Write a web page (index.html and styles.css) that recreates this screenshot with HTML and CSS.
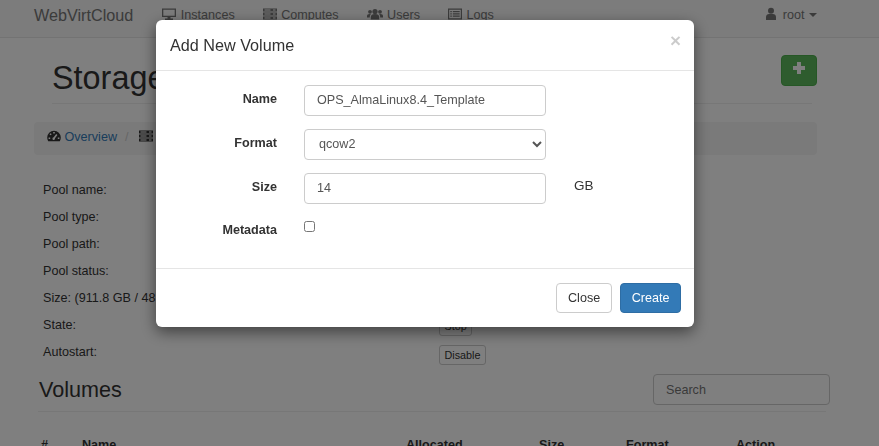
FILE: index.html
```html
<!DOCTYPE html>
<html lang="en">
<head>
  <meta charset="UTF-8">
  <meta name="viewport" content="width=device-width, initial-scale=1.0">
  <title>WebVirtCloud - Storage</title>
  <link rel="stylesheet" href="styles.css">
</head>
<body>

  <nav class="navbar">
    <a class="brand">WebVirtCloud</a>
    <ul class="nav-links">
      <li>
        <svg class="icon" viewBox="0 0 14 14"><path d="M0 1.5h14v8.500H8.500v1.500H11V13H3v-1.500h2.500V10H0zM1.300 2.800v5.900h11.400V2.800z" fill-rule="evenodd"/></svg>
        Instances
      </li>
      <li>
        <svg class="icon" viewBox="0 0 14 14"><path d="M0 1.500h14v3H0zM0 5.500h14v3H0zM0 9.500h14v3H0z"/><path class="cut" d="M1.500 2.600h6v.8h-6zM10 2.600h2.500v.8H10zM1.500 6.600h6v.8h-6zM10 6.600h2.500v.8H10zM1.500 10.600h6v.8h-6zM10 10.600h2.500v.8H10z"/></svg>
        Computes
      </li>
      <li>
        <svg class="icon icon-wide" viewBox="0 0 16 14"><circle cx="8" cy="4.500" r="2.600"/><path d="M3.800 12.500V10c0-2 1.500-3 4.200-3s4.200 1 4.200 3v2.500z"/><circle cx="3" cy="4.800" r="1.900"/><circle cx="13" cy="4.800" r="1.900"/><path d="M0 10.500V9c0-1.300.8-2 2.800-2 .5 0 .8 0 1 .2C3 8 2.800 9 2.800 10.500zM16 10.500V9c0-1.300-.8-2-2.800-2-.5 0-.8 0-1 .2.800.8 1 1.800 1 3.300z"/></svg>
        Users
      </li>
      <li>
        <svg class="icon" viewBox="0 0 14 14"><path d="M0 1.500h14v11H0zM1.200 2.700v8.600h11.600V2.700z" fill-rule="evenodd"/><path d="M2.300 4h1.500v1.200H2.300zM4.800 4h6.900v1.200H4.800zM2.300 6.300h1.500v1.200H2.300zM4.800 6.300h6.900v1.200H4.800zM2.300 8.600h1.500v1.200H2.300zM4.800 8.600h6.900v1.200H4.800z"/></svg>
        Logs
      </li>
    </ul>
    <div class="nav-user">
      <svg class="icon icon-user" viewBox="0 0 12 14"><circle cx="6" cy="3.800" r="3"/><path d="M1 13v-3c0-2 1.500-3 3-3h4c1.500 0 3 1 3 3v3z"/></svg>
      root <span class="caret"></span>
    </div>
  </nav>

  <div class="page">
    <div class="page-header">
      <h1>Storage</h1>
      <button class="btn-add">
        <svg viewBox="0 0 14 14"><path d="M5 1h4v4h4v4H9v4H5V9H1V5h4z"/></svg>
      </button>
    </div>

    <ol class="breadcrumb">
      <li>
        <svg class="icon" viewBox="0 0 14 14"><path d="M7 1.800A6.800 6.800 0 0 0 .2 8.600c0 1.400.4 2.600 1 3.600h11.600c.6-1 1-2.200 1-3.600A6.800 6.800 0 0 0 7 1.800z"/><path class="cut" d="M6.200 3h1.600v1.600H6.200zM2.500 5.200l1.200-1 1 1.100-1.200 1zM1.600 8.400h1.600V10H1.600zM10.800 8.400h1.600V10h-1.600zM9.200 5l1.200 1-2.400 3.300a1.300 1.300 0 1 1-1.300-1z"/></svg>
        Overview
      </li>
      <li class="sep">/</li>
      <li>
        <svg class="icon" viewBox="0 0 14 14"><path d="M0 1.500h14v3H0zM0 5.500h14v3H0zM0 9.500h14v3H0z"/><path class="cut" d="M1.500 2.600h6v.8h-6zM10 2.600h2.500v.8H10zM1.500 6.600h6v.8h-6zM10 6.600h2.500v.8H10zM1.500 10.600h6v.8h-6zM10 10.600h2.500v.8H10z"/></svg>
        Storages
      </li>
    </ol>

    <div class="pool-info">
      <div class="pool-row"><span>Pool name:</span></div>
      <div class="pool-row"><span>Pool type:</span></div>
      <div class="pool-row"><span>Pool path:</span></div>
      <div class="pool-row"><span>Pool status:</span></div>
      <div class="pool-row"><span>Size: (911.8 GB / 48</span></div>
      <div class="pool-row"><span>State:</span><button class="btn-xs">Stop</button></div>
      <div class="pool-row"><span>Autostart:</span><button class="btn-xs btn-low">Disable</button></div>
    </div>

    <div class="volumes-header">
      <h3>Volumes</h3>
      <input class="search" type="text" placeholder="Search">
    </div>

    <div class="table-head">
      <span class="col-num">#</span>
      <span class="col-name">Name</span>
      <span class="col-alloc">Allocated</span>
      <span class="col-size">Size</span>
      <span class="col-format">Format</span>
      <span class="col-action">Action</span>
    </div>
  </div>

  <div class="backdrop"></div>

  <div class="modal">
    <div class="modal-header">
      <h4>Add New Volume</h4>
      <span class="close">&times;</span>
    </div>
    <form class="modal-body">
      <div class="form-row">
        <label>Name</label>
        <input class="form-control" type="text" value="OPS_AlmaLinux8.4_Template">
      </div>
      <div class="form-row">
        <label>Format</label>
        <select class="form-control">
          <option>qcow2</option>
        </select>
      </div>
      <div class="form-row">
        <label>Size</label>
        <input class="form-control" type="text" value="14">
        <span class="unit">GB</span>
      </div>
      <div class="form-row form-row-check">
        <label>Metadata</label>
        <input class="check" type="checkbox">
      </div>
    </form>
    <div class="modal-footer">
      <button class="btn">Close</button>
      <button class="btn btn-primary">Create</button>
    </div>
  </div>

</body>
</html>
```

FILE: styles.css
```css
* {
  box-sizing: border-box;
}

html, body {
  height: 100%;
  overflow: hidden;
}

body {
  margin: 0;
  font-family: "Liberation Sans", Arial, sans-serif;
  font-size: 12.6px;
  line-height: 18px;
  color: #333;
  background-color: #fff;
}

.icon {
  width: 14px;
  height: 14px;
  margin-right: 1px;
  fill: currentColor;
  vertical-align: -2px;
}

.icon-wide {
  width: 16px;
}

.icon-user {
  width: 12px;
  margin-right: 2px;
}

.cut {
  fill: #fff;
}

.navbar {
  display: flex;
  align-items: center;
  height: 38px;
  padding: 0 62px 8px 34px;
  border-bottom: 1px solid #e7e7e7;
  background-color: #f8f8f8;
  color: #777;
}

.brand {
  font-size: 16.2px;
  margin-right: 29px;
}

.nav-links {
  display: flex;
  gap: 28px;
  list-style: none;
  margin: 0;
  padding: 0;
}

.nav-user {
  margin-left: auto;
}

.caret {
  display: inline-block;
  margin-left: 1px;
  vertical-align: middle;
  border-top: 4px solid;
  border-left: 4px solid transparent;
  border-right: 4px solid transparent;
}

.page {
  padding: 0 62px 0 34px;
}

.page-header {
  display: flex;
  justify-content: space-between;
  align-items: flex-start;
  height: 66px;
  margin: 0 5px 18px 18px;
  border-bottom: 1px solid #eee;
}

.page-header h1 {
  margin: 18px 0 0;
  font-size: 32.4px;
  line-height: 44px;
  font-weight: 400;
}

.btn-add {
  width: 36px;
  height: 31px;
  margin: 17px -5px 0 0;
  padding: 0 0 5px;
  border: 1px solid #4cae4c;
  border-radius: 4px;
  background-color: #5cb85c;
}

.btn-add svg {
  width: 14px;
  height: 14px;
  fill: #fff;
  display: block;
  margin: 0 auto;
}

.breadcrumb {
  display: flex;
  gap: 8px;
  height: 33px;
  margin: 0 0 21px;
  padding: 6px 13px 5px;
  list-style: none;
  border-radius: 4px;
  background-color: #f5f5f5;
  color: #337ab7;
}

.breadcrumb .icon {
  margin-right: 0;
  color: #333;
}

.sep {
  margin-right: 3px;
  color: #ccc;
}

.pool-row {
  display: flex;
  align-items: center;
  height: 27px;
  padding-left: 9px;
}

.pool-row span {
  width: 396px;
}

.btn-xs {
  height: 20px;
  margin-top: 3px;
  padding: 0 4.500px;
  font-family: inherit;
  font-size: 10.8px;
  color: #333;
  border: 1px solid #ccc;
  border-radius: 3px;
  background-color: #fff;
}

.btn-low {
  margin-top: 6px;
}

.volumes-header {
  display: flex;
  justify-content: space-between;
  align-items: center;
  height: 42px;
  margin: 5px -9px 0 4px;
  padding: 0 0 2px;
  border-bottom: 1px solid #eee;
}

.volumes-header h3 {
  margin: 0;
  padding-left: 1px;
  font-size: 21.6px;
  line-height: 26px;
  font-weight: 400;
}

.search {
  width: 177px;
  height: 31px;
  margin-right: -4px;
  padding: 6px 12px;
  font-family: inherit;
  font-size: 12.6px;
  border: 1px solid #ccc;
  border-radius: 4px;
}

.table-head {
  display: grid;
  grid-template-columns: 41px 324px 133px 87px 110px auto;
  margin: 24px 0 0 7px;
  font-weight: 700;
}

.backdrop {
  position: fixed;
  inset: 0;
  background-color: #000;
  opacity: 0.5;
}

.modal {
  position: fixed;
  top: 20px;
  left: 156px;
  width: 538px;
  height: 307px;
  border-radius: 6px;
  background-color: #fff;
  box-shadow: 0 5px 15px rgba(0, 0, 0, 0.5);
}

.modal-header {
  display: flex;
  justify-content: space-between;
  height: 51px;
  padding: 14px 13px 15px 14px;
  border-bottom: 1px solid #e5e5e5;
}

.modal-header h4 {
  margin: 0;
  font-size: 16.2px;
  line-height: 22px;
  font-weight: 400;
}

.close {
  margin-top: -4px;
  font-size: 18.9px;
  font-weight: 700;
  line-height: 21px;
  color: #000;
  opacity: 0.2;
}

.modal-body {
  display: flex;
  flex-direction: column;
  gap: 14px;
  height: 198px;
  padding-top: 14px;
  border-bottom: 1px solid #e5e5e5;
}

.form-row {
  display: flex;
  align-items: center;
  height: 30px;
}

.form-row label {
  width: 121px;
  margin-right: 27px;
  padding-bottom: 3px;
  text-align: right;
  font-weight: 700;
}

.form-control {
  width: 242px;
  height: 31px;
  padding: 6px 12px;
  font-family: inherit;
  font-size: 12.6px;
  color: #555;
  border: 1px solid #ccc;
  border-radius: 4px;
  background-color: #fff;
}

select.form-control {
  padding: 6px 10px;
}

.unit {
  margin-left: 28px;
  padding-bottom: 5px;
  font-size: 13.5px;
}

.form-row-check {
  align-items: flex-start;
}

.form-row-check label {
  padding: 4px 0 0;
}

.check {
  width: 11px;
  height: 11px;
  margin: 4px 0 0;
}

.modal-footer {
  display: flex;
  justify-content: flex-end;
  gap: 8px;
  padding: 14px 13px;
}

.btn {
  height: 30px;
  padding: 0 11px;
  font-family: inherit;
  font-size: 12.6px;
  color: #333;
  border: 1px solid #ccc;
  border-radius: 4px;
  background-color: #fff;
}

.btn-primary {
  padding: 0 10.500px;
  color: #fff;
  border-color: #2e6da4;
  background-color: #337ab7;
}
```
